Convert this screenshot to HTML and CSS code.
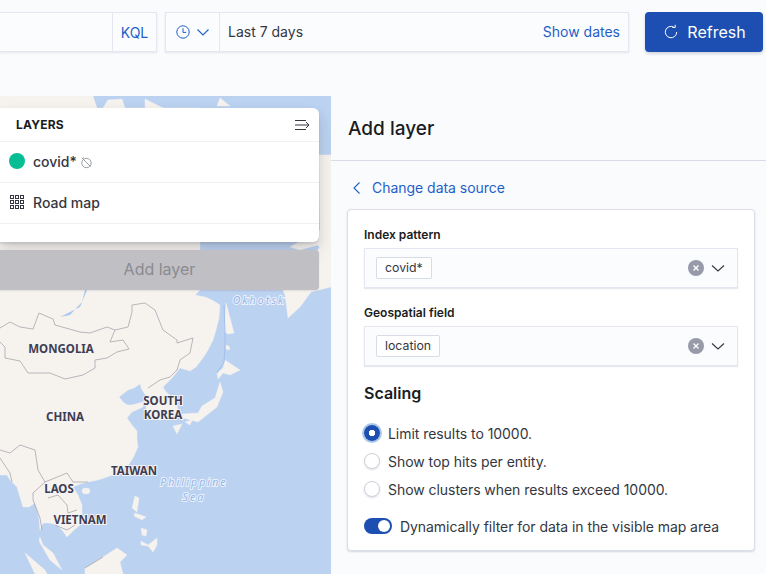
FILE: index.html
```html
<!DOCTYPE html>
<html lang="en">
<head>
<meta charset="utf-8">
<title>Add layer</title>
<link rel="stylesheet" href="styles.css">
</head>
<body>
<header class="topbar">
  <div class="query">
    <div class="query-fill"></div>
    <button class="kql">KQL</button>
  </div>
  <div class="dates">
    <button class="clock">
      <svg width="16" height="16" viewBox="0 0 16 16" fill="none" stroke="currentColor" stroke-width="1"><circle cx="8" cy="8" r="6.2"/><path d="M8 4.2V8.4H11.2"/></svg>
      <svg width="14" height="14" viewBox="0 0 14 14" fill="none" stroke="currentColor" stroke-width="1.1"><path d="M1.5 4.5L7 10l5.500-5.500"/></svg>
    </button>
    <span class="range">Last 7 days</span>
    <a class="show">Show dates</a>
  </div>
  <button class="refresh">
    <svg width="16" height="16" viewBox="0 0 16 16" fill="none" stroke="currentColor" stroke-width="1"><path d="M10.800 3.100A5.700 5.700 0 1 0 13.700 8"/><path d="M11.200 0.800V3.500H8.500" transform="translate(1 0)"/></svg>
    Refresh
  </button>
</header>
<main class="main">
  <section class="map">
    <svg class="map-art" viewBox="0 96 331 478" width="331" height="478">
      <rect class="sea" x="0" y="96" width="331" height="478"/>
      <g class="land">
        <path d="M0 96H93L97 108H200V290L195 295L205 297L212 300L220 305L219 318L216 330L213 340L208 350L203 358L196 367L190 371L180 368L172 378L163 387L166 392L176 400L178 410L172 418L160 420L150 418L146 408L147 397L142 390L140 384L134 388L128 390L119 397L124 403L128 405L132 405L143 402L143 407L132 412L127 418L132 425L137 431L137 440L138 447L133 458L127 467L118 473L110 476L98 480L88 482L80 484L73 487L78 495L82 505L82 518L80 525L74 530L67 537L62 530L57 525L50 523L43 523L40 530L39 518L35 503L29 507L23 507L20 497L17 487L10 480L7 475L0 475Z"/>
        <path d="M40 537L43 545L53 553L62 570L50 560L39 541Z"/>
        <path d="M25 553L45 570L47 574H35Z"/>
        <path d="M117 548L127 555L120 562L123 574H85V568L103 557Z"/>
        <path d="M135 496L139 498L137 512L132 508Z"/>
        <path d="M135 513L146 517L142 520L134 516Z"/>
        <path d="M141 528L147 530L146 536L142 535Z"/>
        <path d="M141 541L148 545L157 538L157 545L153 552L148 546L141 545Z"/>
        <ellipse cx="86" cy="491" rx="4" ry="3"/>
        <path d="M225 360L240 370L230 375L223 373L218 379L217 373L223 368Z"/>
        <path d="M220 382L223 392L217 407L198 422L183 418L182 414L198 413L202 406L215 398Z"/>
        <path d="M173 426L182 424L177 434Z"/>
        <path d="M185 422L192 420L190 425Z"/>
        <path d="M226 303L230 318L234 333L228 334L225 332L225 318Z"/>
        <path d="M226 345L230 347L229 350L226 349Z"/>
        <path d="M283 290L285 295L288 318L300 307L311 292L331 287V250L319 248L300 280Z"/>
        <path d="M319 155H331V250H321L318 245L300 250L290 247L320 230Z"/>
        <path d="M103 108L108 100L122 99L125 108Z"/>
        <path d="M145 99L163 108H145Z"/>
        <path d="M220 98L230 106H217Z"/>
      </g>
      <path class="water" d="M87 290L80 307L60 317L70 315L82 302L85 290Z"/>
      <path class="channel" d="M224 305L225 332L225 345L224 362L217 373"/>
      <g class="border">
        <path d="M0 328L10 322L20 327L33 329L39 313L53 319L55 325L80 332L90 333L107 327L115 330L110 342L123 340L129 349L117 352L107 358L95 360L95 368L83 375L65 379L50 373L28 373L20 361L5 358L5 347L0 342"/>
        <path d="M115 330L128 327L132 312L132 305L145 303L155 310L163 330L177 340L177 343L193 338L190 353L180 360L177 370L170 377L160 380L148 388"/>
        <path d="M0 450L10 453L20 445L35 450L38 470L45 482L67 473L73 482L88 482"/>
        <path d="M45 482L33 493L33 500L40 518L42 530"/>
        <path d="M48 498L58 495L67 505L68 513L77 510"/>
        <path d="M55 525L67 530L75 525"/>
        <path d="M0 458L10 473L12 482"/>
        <path d="M85 568L103 557"/>
      </g>
      <g class="place">
        <text x="61" y="353" text-anchor="middle">MONGOLIA</text>
        <text x="65" y="421" text-anchor="middle">CHINA</text>
        <text x="163" y="405" text-anchor="middle">SOUTH</text>
        <text x="163" y="419" text-anchor="middle">KOREA</text>
        <text x="134" y="475" text-anchor="middle">TAIWAN</text>
        <text x="59" y="493" text-anchor="middle">LAOS</text>
        <text x="80" y="524" text-anchor="middle">VIETNAM</text>
      </g>
      <g class="sealabel">
        <text x="259" y="304" text-anchor="middle">Okhotsk</text>
        <text x="194" y="486" text-anchor="middle">Philippine</text>
        <text x="194" y="500.500" text-anchor="middle">Sea</text>
      </g>
    </svg>
    <div class="overlay">
      <div class="layers">
        <div class="layers-head">
          <h2>LAYERS</h2>
          <svg width="16" height="16" viewBox="0 0 16 16" fill="none" stroke="#343741" stroke-width="1"><path d="M1 3.500H12M1 8H15M1 12.500H12M12 5l3 3-3 3"/></svg>
        </div>
        <div class="layer-row">
          <span class="dot"></span>
          <span class="layer-name">covid*</span>
          <svg class="timer" width="13" height="13" viewBox="0 0 13 13" fill="none" stroke="#8f929c" stroke-width="0.9"><circle cx="6.500" cy="7" r="4.700"/><path d="M2.500 2.500L10.500 10.500M4 1.500L2 3"/></svg>
        </div>
        <div class="layer-row">
          <svg class="grid" width="14" height="14" viewBox="0 0 14 14" fill="none" stroke="#343741" stroke-width="1" shape-rendering="crispEdges"><path d="M.5.5h3v3h-3zM5.500.5h3v3h-3zM10.500.5h3v3h-3zM.5 5.500h3v3h-3zM5.500 5.500h3v3h-3zM10.500 5.500h3v3h-3zM.5 10.500h3v3h-3zM5.500 10.500h3v3h-3zM10.500 10.500h3v3h-3z"/></svg>
          <span class="layer-name">Road map</span>
        </div>
        <div class="layers-foot"></div>
      </div>
      <button class="add-layer">Add layer</button>
    </div>
  </section>
  <aside class="panel">
    <h1 class="panel-title">Add layer</h1>
    <div class="panel-body">
      <a class="back">
        <svg width="12" height="14" viewBox="0 0 12 14" fill="none" stroke="currentColor" stroke-width="1.1"><path d="M8.500 1.500L3 7l5.500 5.500"/></svg>
        Change data source
      </a>
      <form class="card">
        <label class="field-label">Index pattern</label>
        <div class="combo">
          <span class="pill">covid*</span>
          <span class="clear"><svg width="16" height="16" viewBox="0 0 16 16" stroke="#fff" stroke-width="1.3"><path d="M5.500 5.500l5 5M10.500 5.500l-5 5"/></svg></span>
          <svg class="caret" width="14" height="14" viewBox="0 0 14 14" fill="none" stroke="#343741" stroke-width="1.1"><path d="M1 4.500L7 10l6-5.500"/></svg>
        </div>
        <label class="field-label second">Geospatial field</label>
        <div class="combo">
          <span class="pill">location</span>
          <span class="clear"><svg width="16" height="16" viewBox="0 0 16 16" stroke="#fff" stroke-width="1.3"><path d="M5.500 5.500l5 5M10.500 5.500l-5 5"/></svg></span>
          <svg class="caret" width="14" height="14" viewBox="0 0 14 14" fill="none" stroke="#343741" stroke-width="1.1"><path d="M1 4.500L7 10l6-5.500"/></svg>
        </div>
        <h3 class="scaling">Scaling</h3>
        <div class="radios">
          <div class="radio-row"><span class="radio on"></span>Limit results to 10000.</div>
          <div class="radio-row"><span class="radio"></span>Show top hits per entity.</div>
          <div class="radio-row"><span class="radio"></span>Show clusters when results exceed 10000.</div>
        </div>
        <div class="switch-row"><span class="switch"><span class="knob"></span></span>Dynamically filter for data in the visible map area</div>
      </form>
    </div>
  </aside>
</main>
</body>
</html>
```
FILE: styles.css
```css
* { box-sizing: border-box; }
html, body { margin: 0; height: 100%; }
body {
  width: 766px;
  height: 574px;
  overflow: hidden;
  background: #fafbfd;
  font-family: Inter, "Liberation Sans", sans-serif;
  font-size: 14px;
  color: #343741;
  display: flex;
  flex-direction: column;
}
h1, h2, h3 { margin: 0; }
button { font: inherit; border: 0; background: none; padding: 0; }

.topbar {
  height: 96px;
  flex: none;
  padding: 12px 3px 0 0;
  display: flex;
  align-items: flex-start;
}
.query, .dates {
  height: 40px;
  background: #fbfcfe;
  border: 1px solid #e4e7f1;
  box-shadow: 0 1px 2px rgba(152, 162, 179, .25);
  display: flex;
  align-items: stretch;
}
.query { width: 157px; border-left: 0; margin-right: 8px; }
.query-fill { flex: 1; }
.kql {
  width: 44px;
  border-left: 1px solid #e4e7f1;
  color: #1f5fc8;
  text-align: center;
}
.dates { width: 464px; margin-right: 16px; }
.clock {
  width: 54px;
  display: flex;
  align-items: center;
  justify-content: center;
  gap: 5px;
  color: #1f5fc8;
  border-right: 1px solid #e4e7f1;
}
.range { flex: 1; line-height: 38px; padding-left: 8px; }
.show { line-height: 38px; padding-right: 8px; color: #1f5fc8; }
.refresh {
  width: 118px;
  height: 40px;
  padding-left: 1px;
  background: #1c4fb1;
  border-radius: 4px;
  color: #fff;
  font-size: 16px;
  display: flex;
  align-items: center;
  justify-content: center;
  gap: 8px;
  box-shadow: 0 2px 3px rgba(60, 70, 100, .2);
}

.main { flex: 1; display: flex; min-height: 0; }
.map { width: 331px; flex: none; position: relative; overflow: hidden; }
.map-art { display: block; }
.sea { fill: #bcd2f1; }
.land path, .land ellipse { fill: #f6f3ef; stroke: #f6f3ef; stroke-width: .4; stroke-linejoin: round; }
.water { fill: #aac7ee; }
.channel { fill: none; stroke: #a2c0ec; stroke-width: 1; }
.border path { fill: none; stroke: #a8a5ad; stroke-width: .8; }
.place text {
  font-family: "Noto Sans", "Open Sans", sans-serif;
  font-weight: 700;
  font-size: 11.500px;
  fill: #3f3d50;
  stroke: #f4f3f4;
  stroke-width: 2px;
  paint-order: stroke;
}
.sealabel text {
  font-family: "Noto Sans", "Open Sans", sans-serif;
  font-style: italic;
  font-size: 10.500px;
  letter-spacing: 2.100px;
  fill: #96b5e8;
  stroke: #eaf1fb;
  stroke-width: 2px;
  paint-order: stroke;
}

.overlay {
  position: absolute;
  left: 0;
  top: 12px;
  width: 319px;
}
.layers {
  background: #fff;
  border-radius: 0 6px 6px 0;
  box-shadow: 0 2px 2px rgba(60, 60, 70, .12), 0 6px 12px rgba(60, 60, 70, .14), 0 10px 20px rgba(60, 60, 70, .08);
}
.layers-head {
  height: 34px;
  padding: 0 9px 0 16px;
  display: flex;
  align-items: center;
  justify-content: space-between;
  border-bottom: 1px solid #f0f1f4;
}
.layers-head h2 { font-size: 12px; font-weight: 700; color: #1a1c21; letter-spacing: .2px; }
.layer-row {
  height: 41px;
  display: flex;
  align-items: center;
  padding: 0 0 2px 9px;
  border-bottom: 1px solid #f0f1f4;
  position: relative;
}
.dot {
  width: 16px;
  height: 16px;
  border-radius: 50%;
  background: #07bd93;
  margin-right: 8px;
}
.grid { margin-right: 9px; margin-left: 1px; }
.layer-name { font-weight: 500; }
.timer { margin-left: 3px; margin-top: 2px; }
.layers-foot { height: 18px; }
.add-layer {
  display: block;
  width: 100%;
  height: 40px;
  margin-top: 8px;
  padding-bottom: 2px;
  background: #c0bfc3;
  border-radius: 0 4px 4px 0;
  color: #8b8b91;
  font-size: 16px;
  box-shadow: 0 1px 2px rgba(60, 60, 70, .12);
}

.panel { flex: 1; min-width: 0; }
.panel-title {
  height: 65px;
  border-bottom: 1px solid #d8dbe8;
  padding: 20px 0 0 17px;
  font-size: 19px;
  line-height: 26px;
  font-weight: 500;
  color: #1a1c21;
}
.panel-body { padding: 0 11px 0 16px; }
.back {
  height: 48px;
  padding: 5px 0 0 4px;
  display: flex;
  align-items: center;
  gap: 9px;
  color: #1f5fc8;
  letter-spacing: -.03px;
}
.card {
  height: 342px;
  background: #fff;
  border: 1px solid #dcdfe9;
  border-radius: 4px;
  padding: 16px 16px 0;
  box-shadow: 0 1px 2px rgba(120, 130, 155, .3);
  display: flex;
  flex-direction: column;
}
.card > * { flex: none; }
.field-label { font-size: 12px; font-weight: 600; color: #1a1c21; line-height: 18px; height: 22px; }
.field-label.second { margin-top: 16px; }
.combo {
  height: 40px;
  background: #fbfcfe;
  border: 1px solid #e4e7f1;
  box-shadow: 0 1px 1px rgba(152, 162, 179, .25);
  display: flex;
  align-items: center;
  padding: 0 12px 0 11px;
}
.pill {
  height: 22px;
  line-height: 20px;
  padding: 0 8px;
  border: 1px solid #d8dbe8;
  border-radius: 2px;
  background: #fff;
  font-size: 12.300px;
  margin-right: auto;
}
.clear {
  width: 16px;
  height: 16px;
  border-radius: 50%;
  background: #989aaa;
  margin-right: 7px;
}
.clear svg { display: block; }
.scaling { font-size: 16px; font-weight: 600; color: #1a1c21; line-height: 24px; margin-top: 15px; }
.radios { margin-top: 18px; display: flex; flex-direction: column; gap: 8px; }
.radio-row { height: 20px; display: flex; align-items: center; gap: 8px; letter-spacing: -.05px; }
.radio {
  width: 16px;
  height: 16px;
  border-radius: 50%;
  background: #fff;
  border: 1px solid #d0d2db;
  box-shadow: 0 1px 2px rgba(120, 130, 155, .25);
}
.radio.on {
  border: 0;
  background: radial-gradient(circle, #fff 3px, #1c4fb1 3.500px);
  box-shadow: 0 0 0 2px #a9c8e8;
}
.switch-row { margin-top: 17px; height: 20px; display: flex; align-items: center; gap: 8px; letter-spacing: -.06px; }
.switch {
  width: 28px;
  height: 16px;
  border-radius: 8px;
  background: #1c4fb1;
  position: relative;
}
.knob {
  position: absolute;
  right: 2px;
  top: 2px;
  width: 12px;
  height: 12px;
  border-radius: 50%;
  background: #fff;
}
.caret { display: block; }
```
